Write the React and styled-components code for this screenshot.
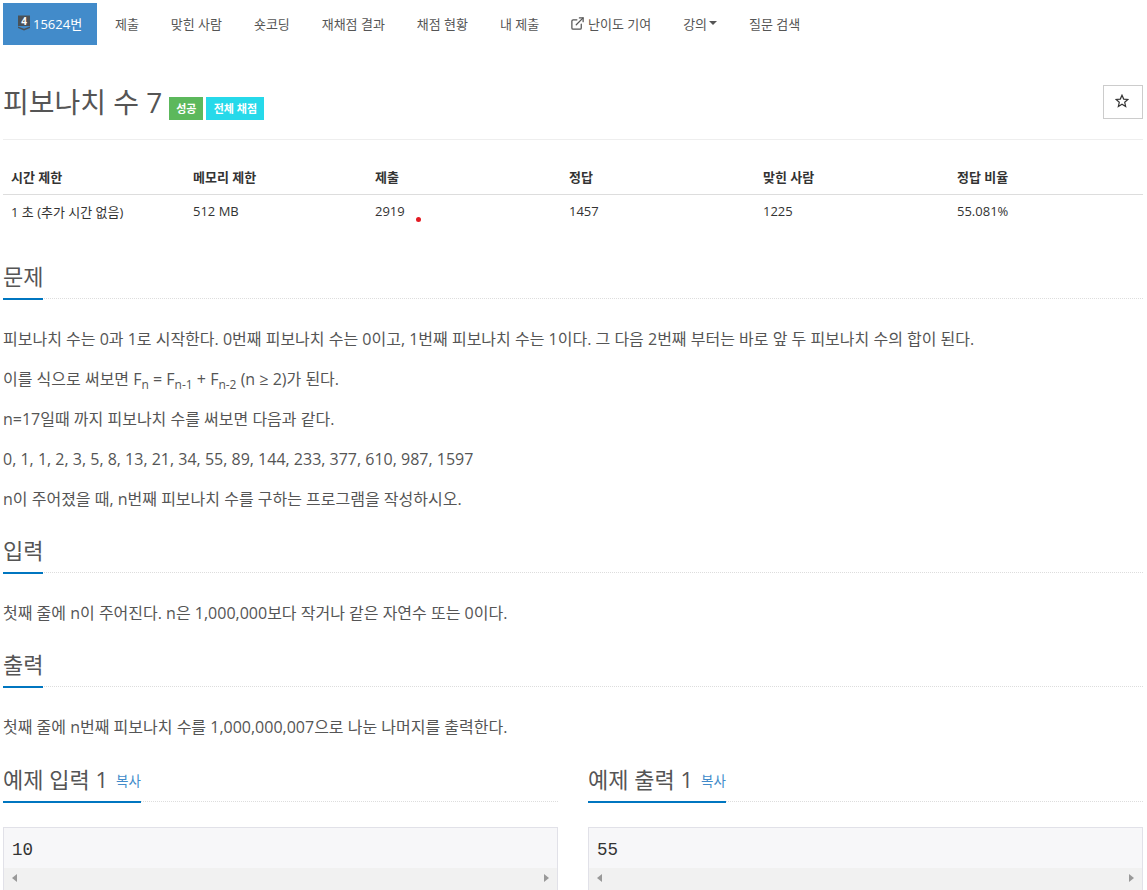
import React from "react";
import styled, { createGlobalStyle } from "styled-components";
import { ExternalLink } from "lucide-react";

const Global = createGlobalStyle`
  html, body { margin: 0; padding: 0; height: 890px; overflow: hidden; background: #fff; }
  body { font-family: "Open Sans", "Noto Sans CJK KR", sans-serif; color: #555; font-size: 14px; }
  * { box-sizing: border-box; }
`;
const Page = styled.div`
  padding: 3px 4px 0 3px;
`;
const Nav = styled.nav`
  display: flex;
  height: 42px;
  align-items: stretch;
`;
const NavItem = styled.a`
  display: flex;
  align-items: center;
  padding: 0 15.9px 2px 16px;
  font-size: 13px;
  color: #555;
  white-space: nowrap;
`;
const BrandItem = styled.a`
  display: flex;
  align-items: center;
  width: 94px;
  margin-right: 2px;
  padding: 0 0 2px 14px;
  font-size: 13px;
  color: #fff;
  background: #428bca;
  white-space: nowrap;
`;
const Caret = styled.span`
  width: 0;
  height: 0;
  margin-left: 2px;
  border-left: 4px solid transparent;
  border-right: 4px solid transparent;
  border-top: 4px solid #555;
`;
const LinkIcon = styled(ExternalLink)`
  margin: 0 3px 0 -1px;
`;
const TitleBar = styled.div`
  display: flex;
  align-items: center;
  margin-top: 25px;
  height: 70px;
  padding-bottom: 2px;
  border-bottom: 1px solid #eee;
`;
const Title = styled.h1`
  margin: 0 7px 4px 0;
  font-size: 28px;
  font-weight: 400;
  color: #555;
  line-height: 40px;
`;
const Label = styled.span`
  display: inline-flex;
  align-items: center;
  justify-content: center;
  width: ${(p) => p.$w}px;
  height: 23px;
  margin-top: 9px;
  margin-right: 3px;
  font-size: 11px;
  font-weight: 700;
  color: #fff;
  background: ${(p) => p.$bg};
`;
const StarButton = styled.button`
  margin-left: auto;
  margin-top: -3px;
  width: 40px;
  height: 34px;
  display: flex;
  align-items: center;
  justify-content: center;
  background: #fff;
  border: 1px solid #ccc;
  color: #333;
  padding: 0 2px 2px 0;
`;
const InfoTable = styled.table`
  width: 100%;
  table-layout: fixed;
  border-collapse: separate;
  border-spacing: 0;
  margin-top: 19px;
  font-size: 13px;
  color: #333;
  position: relative;
`;
const Th = styled.th`
  width: ${(p) => p.$w}px;
  height: 36px;
  padding: 0 8px;
  text-align: left;
  font-weight: 700;
  border-bottom: 1px solid #ddd;
`;
const Td = styled.td`
  height: 36px;
  padding: 0 8px 4px;
`;
const Dot = styled.span`
  position: absolute;
  left: 413px;
  top: 58px;
  width: 5px;
  height: 5px;
  border-radius: 50%;
  background: #e31b23;
`;
const Section = styled.section`
  margin-top: ${(p) => p.$mt ?? 0}px;
`;
const Headline = styled.div`
  border-bottom: 1px dotted #ddd;
  height: 37px;
  display: flex;
`;
const HeadInner = styled.h2`
  margin: 0;
  font-size: 22px;
  font-weight: 400;
  line-height: 28px;
  color: #555;
  height: 38px;
  border-bottom: 2px solid #0076c0;
  white-space: nowrap;
`;
const Copy = styled.a`
  font-size: 13.5px;
  color: #428bca;
  margin-left: 8px;
  margin-right: 0.5px;
  vertical-align: 2px;
`;
const Para = styled.p`
  margin: 0;
  font-size: 16px;
  line-height: 40px;
  height: 40px;
  color: #555;
  white-space: nowrap;
`;
const Body = styled.div`
  margin-top: 20px;
`;
const Sub = styled.sub`
  font-size: 12px;
  line-height: 0;
  vertical-align: -4px;
`;
const Samples = styled.div`
  display: grid;
  grid-template-columns: 1fr 1fr;
  column-gap: 30px;
  margin-top: 18px;
`;
const Pre = styled.div`
  margin-top: 25px;
  height: 80px;
  border: 1px solid #e1e1e8;
  background: #f7f7f9;
  display: flex;
  flex-direction: column;
`;
const Code = styled.div`
  font-family: "Liberation Mono", monospace;
  font-size: 17.5px;
  line-height: 20px;
  color: #333;
  padding: 12px 8px 8px;
  height: 41px;
`;
const ScrollBar = styled.div`
  background: #f1f1f1;
  height: 39px;
  display: flex;
  justify-content: space-between;
  padding: 6px 8px 0;
`;
const Arrow = styled.span`
  width: 0;
  height: 0;
  border-top: 4.5px solid transparent;
  border-bottom: 4.5px solid transparent;
  ${(p) => (p.$right ? "border-left: 5px solid #999;" : "border-right: 5px solid #999;")}
`;

const TierIcon = () => (
  <svg width="14" height="16" viewBox="0 0 14 16" style={{ marginRight: 2 }}>
    <path d="M1 0.5h12v10.5H1z" fill="#4a5258" />
    <path d="M1 11.5l6 2.2 6-2.2v1.4l-6 2.6-6-2.6z" fill="#4a5258" />
    <text x="7" y="9.5" fontSize="10" fontWeight="700" fill="#fff" textAnchor="middle" fontFamily="Open Sans">4</text>
  </svg>
);

const StarIcon = () => (
  <svg width="14" height="14" viewBox="0 0 14 14">
    <path
      d="M7 1.2l1.7 3.9 4.2.4-3.2 2.8.95 4.1L7 10.2l-3.65 2.2.95-4.1-3.2-2.8 4.2-.4z"
      fill="none"
      stroke="#333"
      strokeWidth="1.2"
      strokeLinejoin="miter"
    />
  </svg>
);

const Sample = ({ title, value }) => (
  <div>
    <Headline>
      <HeadInner>
        {title}
        <Copy>복사</Copy>
      </HeadInner>
    </Headline>
    <Pre>
      <Code>{value}</Code>
      <ScrollBar>
        <Arrow />
        <Arrow $right />
      </ScrollBar>
    </Pre>
  </div>
);

export default function App() {
  return (
    <Page>
      <Global />
      <Nav>
        <BrandItem><TierIcon />15624번</BrandItem>
        <NavItem>제출</NavItem>
        <NavItem>맞힌 사람</NavItem>
        <NavItem>숏코딩</NavItem>
        <NavItem>재채점 결과</NavItem>
        <NavItem>채점 현황</NavItem>
        <NavItem>내 제출</NavItem>
        <NavItem><LinkIcon size={15} />난이도 기여</NavItem>
        <NavItem>강의<Caret /></NavItem>
        <NavItem>질문 검색</NavItem>
      </Nav>
      <TitleBar>
        <Title>피보나치 수 7</Title>
        <Label $bg="#5cb85c" $w={34}>성공</Label>
        <Label $bg="#26d9ea" $w={58}>전체 채점</Label>
        <StarButton><StarIcon /></StarButton>
      </TitleBar>
      <InfoTable>
        <thead>
          <tr>
            <Th $w={182}>시간 제한</Th>
            <Th $w={182}>메모리 제한</Th>
            <Th $w={194}>제출</Th>
            <Th $w={194}>정답</Th>
            <Th $w={194}>맞힌 사람</Th>
            <Th $w={194}>정답 비율</Th>
          </tr>
        </thead>
        <tbody>
          <tr>
            <Td>1 초 (추가 시간 없음)</Td>
            <Td>512 MB</Td>
            <Td>2919</Td>
            <Td>1457</Td>
            <Td>1225</Td>
            <Td>55.081%</Td>
          </tr>
        </tbody>
        <Dot as="caption" />
      </InfoTable>
      <Section $mt={31}>
        <Headline><HeadInner>문제</HeadInner></Headline>
        <Body>
          <Para>피보나치 수는 0과 1로 시작한다. 0번째 피보나치 수는 0이고, 1번째 피보나치 수는 1이다. 그 다음 2번째 부터는 바로 앞 두 피보나치 수의 합이 된다.</Para>
          <Para>이를 식으로 써보면 F<Sub>n</Sub> = F<Sub>n-1</Sub> + F<Sub>n-2</Sub> (n ≥ 2)가 된다.</Para>
          <Para>n=17일때 까지 피보나치 수를 써보면 다음과 같다.</Para>
          <Para>0, 1, 1, 2, 3, 5, 8, 13, 21, 34, 55, 89, 144, 233, 377, 610, 987, 1597</Para>
          <Para>n이 주어졌을 때, n번째 피보나치 수를 구하는 프로그램을 작성하시오.</Para>
        </Body>
      </Section>
      <Section $mt={17}>
        <Headline><HeadInner>입력</HeadInner></Headline>
        <Body>
          <Para>첫째 줄에 n이 주어진다. n은 1,000,000보다 작거나 같은 자연수 또는 0이다.</Para>
        </Body>
      </Section>
      <Section $mt={17}>
        <Headline><HeadInner>출력</HeadInner></Headline>
        <Body>
          <Para>첫째 줄에 n번째 피보나치 수를 1,000,000,007으로 나눈 나머지를 출력한다.</Para>
        </Body>
      </Section>
      <Samples>
        <Sample title="예제 입력 1" value="10" />
        <Sample title="예제 출력 1" value="55" />
      </Samples>
    </Page>
  );
}
